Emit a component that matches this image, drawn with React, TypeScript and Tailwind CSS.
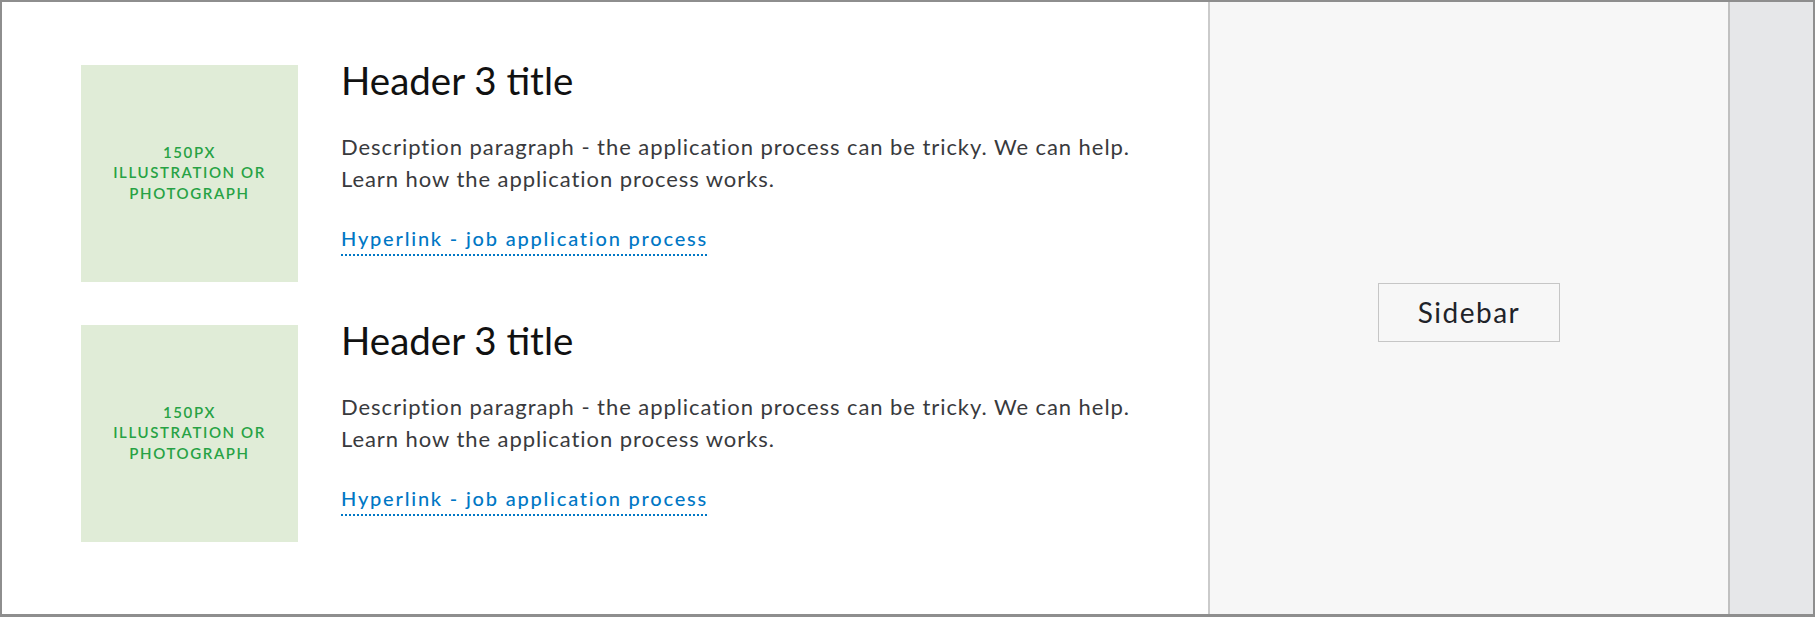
import React from "react";

const font = { fontFamily: "Lato, 'Open Sans', sans-serif" };

function Card() {
  return (
    <div className="flex items-start gap-[43px]">
      <div className="w-[217px] h-[217px] shrink-0 bg-[#e0ecd7] flex items-center justify-center pb-[2px]">
        <div className="text-center text-[#27a244] text-[15px] leading-[20.5px] tracking-[1.6px] font-semibold">
          150PX
          <br />
          ILLUSTRATION OR
          <br />
          PHOTOGRAPH
        </div>
      </div>
      <div className="flex flex-col">
        <h3 className="text-[38.5px] leading-[46px] text-[#111] font-normal mt-[-8.2px]">Header 3 title</h3>
        <p className="mt-[28.2px] text-[22px] leading-[31.5px] tracking-[0.94px] text-[#393a3d]">
          Description paragraph - the application process can be tricky. We can help.
          <br />
          Learn how the application process works.
        </p>
        <div className="mt-[30.2px] text-[20px] leading-[28px]">
          <a
            href="#"
            className="text-[#0077c5] font-medium tracking-[1.8px] underline decoration-dotted decoration-[1.5px] underline-offset-[8px]"
          >
            Hyperlink - job application process
          </a>
        </div>
      </div>
    </div>
  );
}

export default function App() {
  return (
    <div style={font} className="w-[1815px] h-[617px] border-2 border-b-[3px] border-[#8e8e8e] flex bg-white">
      <main className="flex-1 pl-[79px] pt-[63px] flex flex-col gap-[43px]">
        <Card />
        <Card />
      </main>
      <aside className="w-[520px] shrink-0 border-l-2 border-[#cbcbcb] bg-[#f7f7f7] flex items-center justify-center pt-[8px]">
        <div className="w-[182px] h-[59px] border-[1.5px] border-[#c6c6c6] flex items-center justify-center text-[28px] tracking-[1.5px] font-normal text-[#1f2329]">
          Sidebar
        </div>
      </aside>
      <div className="w-[85px] shrink-0 border-l-2 border-[#c0c0c0] bg-[#e6e7e9]" />
    </div>
  );
}
